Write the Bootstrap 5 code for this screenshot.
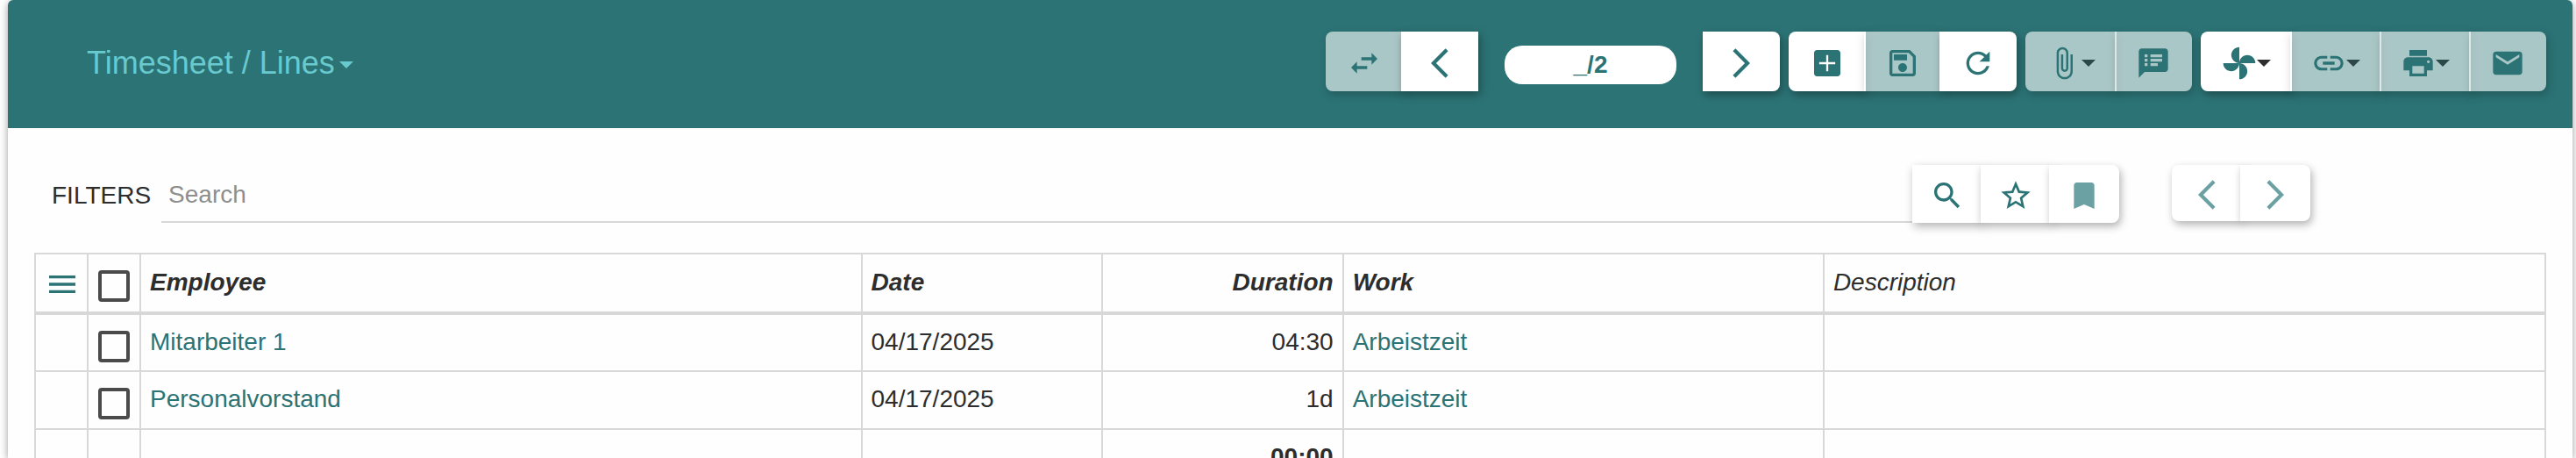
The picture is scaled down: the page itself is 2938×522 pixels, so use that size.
<!DOCTYPE html>
<html lang="en">
<head>
<meta charset="utf-8">
<meta name="viewport" content="width=device-width, initial-scale=1">
<title>Timesheet / Lines</title>
<link href="https://cdn.jsdelivr.net/npm/bootstrap@5.3.0/dist/css/bootstrap.min.css" rel="stylesheet">
<style>
  :root { --teal: #2c7375; --ink: #2d2d2d; --rule: #d8d8d8; }
  body { font-family: "Liberation Sans", Arial, sans-serif; font-size: 28px; line-height: 40px; color: var(--ink); background: #fff; }
  a { color: var(--teal); text-decoration: none; }
  svg { width: 40px; height: 40px; fill: currentColor; display: block; flex: none; }
  .panel { margin: 0 4px 0 9px; border-radius: 6px 6px 0 0; background: #fefefe; box-shadow: 0 2px 10px rgba(0,0,0,.4); min-height: 0; }
  .panel-head { background: var(--teal); border-radius: 6px 6px 0 0; padding: 36px 30px 42px 90px; }
  .view-title { font-size: 36px; color: #68c9cf; gap: 5px; padding-top: 4px; }
  .view-title .arrow-down { margin-top: 4px; }
  .arrow-down { border: 8px solid transparent; border-top-color: currentColor; border-bottom: 0; flex: none; }
  .tools { gap: 10px; }
  .tool { display: flex; align-items: center; border: 0; border-radius: 0; background: #fff; color: var(--teal); height: 68px; padding: 4px 24px 0; box-shadow: 2px 4px 10px rgba(0,0,0,.35); position: relative; }
  .tool .arrow-down { color: var(--ink); }
  .tool + .tool { margin-left: -2px; }
  .tool:disabled { opacity: .6; }
  .round-start { border-top-left-radius: 8px; border-bottom-left-radius: 8px; }
  .round-end { border-top-right-radius: 8px; border-bottom-right-radius: 8px; }
  .counter { width: 196px; height: 44px; margin: 8px 30px 0; border-radius: 20px; background: #fff; color: var(--teal); line-height: 44px; }
  .panel-body-area { padding: 42px 30px 0; gap: 34px; min-height: 0; }
  .filter-col { padding: 0 10px 0 20px; }
  .filter-label { padding: 3px 12px 0 0; }
  .filter-input { min-width: 0; height: 66px; border: 0; border-bottom: 2px solid var(--rule); background: transparent; padding: 3px 8px 0; color: var(--ink); outline: 0; }
  .filter-input::placeholder { color: #8e8e8e; opacity: 1; }
  .filter-bar .tool { height: 66px; padding: 4px 20px 0; box-shadow: 2px 4px 10px rgba(0,0,0,.3); }
  .filter-bar .tool:disabled { opacity: 1; color: #6ba1a3; }
  .filter-bar .pager-col { padding-left: 50px; }
  .filter-bar .pager-col .tool { height: 64px; }
  .grid-area { min-height: 0; overflow: hidden; }
  .grid-table { table-layout: fixed; margin: 0; color: var(--ink); --bs-table-bg: transparent; }
  .grid-table > :not(caption) > tr > * { height: 66px; padding: 11px 10px 9px; border: 2px solid var(--rule); vertical-align: top; color: var(--ink); }
  .grid-table > thead > tr > th { height: 68px; padding-top: 12px; border-bottom-width: 4px; font-style: italic; }
  .grid-table > :not(caption) > tr > .tight { padding: 0; }
  .grid-table > thead > tr > .light-head { font-weight: 400; }
  .narrow { width: 60px; }
  .menu-btn { display: block; border: 0; background: none; padding: 14px 10px 0; color: var(--teal); }
  .pick { display: block; appearance: none; width: 36px; height: 36px; margin: 18px 0 0 11px; border: 4px solid #4a4a4a; border-radius: 4px; }
</style>
</head>
<body class="vh-100 d-flex flex-column overflow-hidden">
<main class="panel flex-fill d-flex flex-column">
  <header class="panel-head d-flex align-items-center justify-content-between">
    <a href="#" class="view-title d-flex align-items-center text-nowrap">Timesheet / Lines<span class="arrow-down"></span></a>
    <div class="tools d-flex">
      <div class="d-flex align-items-center" role="group" aria-label="Navigation">
        <button type="button" class="tool round-start" aria-label="Switch view" disabled><svg viewBox="0 0 24 24"><path d="M6.99 11L3 15l3.99 4v-3H14v-2H6.99v-3zM21 9l-3.99-4v3H10v2h7.01v3L21 9z"/></svg></button>
        <button type="button" class="tool" aria-label="Previous"><svg viewBox="0 0 24 24"><path d="M17.77 3.77L16 2 6 12l10 10 1.77-1.77L9.54 12z"/></svg></button>
        <span class="counter text-center fw-bold">_/2</span>
        <button type="button" class="tool round-end" aria-label="Next"><svg viewBox="0 0 24 24"><path d="M6.23 20.23L8 22l10-10L8 2 6.23 3.77 14.46 12z"/></svg></button>
      </div>
      <div class="d-flex" role="group" aria-label="Record">
        <button type="button" class="tool round-start" aria-label="New"><svg viewBox="0 0 24 24"><path d="M19 3H5c-1.11 0-2 .9-2 2v14c0 1.1.89 2 2 2h14c1.1 0 2-.9 2-2V5c0-1.1-.9-2-2-2zm-1.5 9.7h-4.8v4.8h-1.4v-4.8H6.5v-1.4h4.8V6.5h1.4v4.8h4.8v1.4z"/></svg></button>
        <button type="button" class="tool" aria-label="Save" disabled><svg viewBox="0 0 24 24"><path d="M17 3H5c-1.11 0-2 .9-2 2v14c0 1.1.89 2 2 2h14c1.1 0 2-.9 2-2V7l-4-4zm2 16H5V5h11.17L19 7.83V19zm-7-7c-1.66 0-3 1.34-3 3s1.34 3 3 3 3-1.34 3-3-1.34-3-3-3zM6 6h9v4H6z"/></svg></button>
        <button type="button" class="tool round-end" aria-label="Reload"><svg viewBox="0 0 24 24"><path d="M17.65 6.35C16.2 4.9 14.21 4 12 4c-4.42 0-7.99 3.58-7.99 8s3.57 8 7.99 8c3.73 0 6.84-2.55 7.73-6h-2.08c-.82 2.33-3.04 4-5.65 4-3.31 0-6-2.69-6-6s2.69-6 6-6c1.66 0 3.14.69 4.22 1.78L13 11h7V4l-2.35 2.35z"/></svg></button>
      </div>
      <div class="d-flex" role="group" aria-label="Attachments">
        <button type="button" class="tool round-start" aria-label="Attachment" disabled><svg viewBox="0 0 24 24"><path d="M16.5 6v11.5c0 2.21-1.79 4-4 4s-4-1.79-4-4V5c0-1.38 1.12-2.5 2.5-2.5s2.5 1.12 2.5 2.5v10.5c0 .55-.45 1-1 1s-1-.45-1-1V6H10v9.5c0 1.38 1.12 2.5 2.5 2.5s2.5-1.12 2.5-2.5V5c0-2.21-1.79-4-4-4S7 2.79 7 5v12.5c0 3.04 2.46 5.5 5.5 5.5s5.5-2.46 5.5-5.5V6h-1.5z"/></svg><span class="arrow-down"></span></button>
        <button type="button" class="tool round-end" aria-label="Notes" disabled><svg viewBox="0 0 24 24"><path d="M20 2H4c-1.1 0-1.99.9-1.99 2L2 22l4-4h14c1.1 0 2-.9 2-2V4c0-1.1-.9-2-2-2zM8 14H6v-2h2v2zm0-3H6V9h2v2zm0-3H6V6h2v2zm7 6h-5v-2h5v2zm3-3h-8V9h8v2zm0-3h-8V6h8v2z"/></svg></button>
      </div>
      <div class="d-flex" role="group" aria-label="Actions">
        <button type="button" class="tool round-start" aria-label="Launch action"><svg viewBox="0 0 24 24"><path d="M12 12c0-3 2.5-5.5 5.5-5.5S23 9 23 12H12zm0 0c0 3-2.5 5.5-5.5 5.5S1 15 1 12h11zm0 0c-3 0-5.5-2.5-5.5-5.5S9 1 12 1v11zm0 0c3 0 5.5 2.5 5.5 5.5S15 23 12 23V12z"/></svg><span class="arrow-down"></span></button>
        <button type="button" class="tool" aria-label="Open related" disabled><svg viewBox="0 0 24 24"><path d="M3.9 12c0-1.71 1.39-3.1 3.1-3.1h4V7H7c-2.76 0-5 2.24-5 5s2.24 5 5 5h4v-1.9H7c-1.71 0-3.1-1.39-3.1-3.1zM8 13h8v-2H8v2zm9-6h-4v1.9h4c1.71 0 3.1 1.39 3.1 3.1s-1.39 3.1-3.1 3.1h-4V17h4c2.76 0 5-2.24 5-5s-2.24-5-5-5z"/></svg><span class="arrow-down"></span></button>
        <button type="button" class="tool" aria-label="Print" disabled><svg viewBox="0 0 24 24"><path d="M19 8H5c-1.66 0-3 1.34-3 3v6h4v4h12v-4h4v-6c0-1.66-1.34-3-3-3zm-3 11H8v-5h8v5zm3-7c-.55 0-1-.45-1-1s.45-1 1-1 1 .45 1 1-.45 1-1 1zm-1-9H6v4h12V3z"/></svg><span class="arrow-down"></span></button>
        <button type="button" class="tool round-end" aria-label="Email" disabled><svg viewBox="0 0 24 24"><path d="M20 4H4c-1.1 0-1.99.9-1.99 2L2 18c0 1.1.9 2 2 2h16c1.1 0 2-.9 2-2V6c0-1.1-.9-2-2-2zm0 4l-8 5-8-5V6l8 5 8-5v2z"/></svg></button>
      </div>
    </div>
  </header>

  <section class="panel-body-area flex-fill d-flex flex-column">
    <form class="filter-bar row gx-0">
      <div class="filter-col col-10 d-flex align-items-center">
        <label class="filter-label" for="filter">FILTERS</label>
        <input id="filter" class="filter-input flex-fill" type="text" placeholder="Search">
        <button type="button" class="tool" aria-label="Search"><svg viewBox="0 0 24 24"><path d="M15.5 14h-.79l-.28-.27C15.41 12.59 16 11.11 16 9.5 16 5.91 13.09 3 9.5 3S3 5.91 3 9.5 5.91 16 9.5 16c1.61 0 3.09-.59 4.23-1.57l.27.28v.79l5 4.99L20.49 19l-4.99-5zm-6 0C7.01 14 5 11.99 5 9.5S7.01 5 9.5 5 14 7.01 14 9.5 11.99 14 9.5 14z"/></svg></button>
        <button type="button" class="tool" aria-label="Bookmark this filter"><svg viewBox="0 0 24 24"><path d="M22 9.24l-7.19-.62L12 2 9.19 8.63 2 9.24l5.46 4.73L5.82 21 12 17.27 18.18 21l-1.63-7.03L22 9.24zM12 15.4l-3.76 2.27 1-4.28-3.32-2.88 4.38-.38L12 6.1l1.71 4.04 4.38.38-3.32 2.88 1 4.28L12 15.4z"/></svg></button>
        <button type="button" class="tool round-end" aria-label="Bookmarks" disabled><svg viewBox="0 0 24 24"><path d="M17 3H7c-1.1 0-1.99.9-1.99 2L5 21l7-3 7 3V5c0-1.1-.9-2-2-2z"/></svg></button>
      </div>
      <div class="pager-col col-2 d-flex">
        <button type="button" class="tool round-start" aria-label="Previous page" disabled><svg viewBox="0 0 24 24"><path d="M17.77 3.77L16 2 6 12l10 10 1.77-1.77L9.54 12z"/></svg></button>
        <button type="button" class="tool round-end" aria-label="Next page" disabled><svg viewBox="0 0 24 24"><path d="M6.23 20.23L8 22l10-10L8 2 6.23 3.77 14.46 12z"/></svg></button>
      </div>
    </form>

    <div class="grid-area flex-fill">
      <table class="grid-table table table-bordered">
        <colgroup>
          <col class="narrow"><col class="narrow">
          <col style="width:28.73%"><col style="width:9.58%"><col style="width:9.6%"><col style="width:19.15%"><col>
        </colgroup>
        <thead>
          <tr>
            <th class="tight"><button type="button" class="menu-btn" aria-label="Columns"><svg viewBox="0 0 24 24"><path d="M3 18h18v-2H3v2zm0-5h18v-2H3v2zm0-7v2h18V6H3z"/></svg></button></th>
            <th class="tight"><input class="pick" type="checkbox" aria-label="Select all"></th>
            <th>Employee</th>
            <th>Date</th>
            <th class="text-end">Duration</th>
            <th>Work</th>
            <th class="light-head">Description</th>
          </tr>
        </thead>
        <tbody>
          <tr>
            <td></td>
            <td class="tight"><input class="pick" type="checkbox" aria-label="Select Mitarbeiter 1"></td>
            <td><a href="#">Mitarbeiter 1</a></td>
            <td>04/17/2025</td>
            <td class="text-end">04:30</td>
            <td><a href="#">Arbeistzeit</a></td>
            <td></td>
          </tr>
          <tr>
            <td></td>
            <td class="tight"><input class="pick" type="checkbox" aria-label="Select Personalvorstand"></td>
            <td><a href="#">Personalvorstand</a></td>
            <td>04/17/2025</td>
            <td class="text-end">1d</td>
            <td><a href="#">Arbeistzeit</a></td>
            <td></td>
          </tr>
        </tbody>
        <tfoot>
          <tr>
            <td></td><td></td><td></td><td></td>
            <td class="text-end fw-bold">00:00</td>
            <td></td><td></td>
          </tr>
        </tfoot>
      </table>
    </div>
  </section>
</main>
<script src="https://cdn.jsdelivr.net/npm/bootstrap@5.3.0/dist/js/bootstrap.bundle.min.js"></script>
</body>
</html>
